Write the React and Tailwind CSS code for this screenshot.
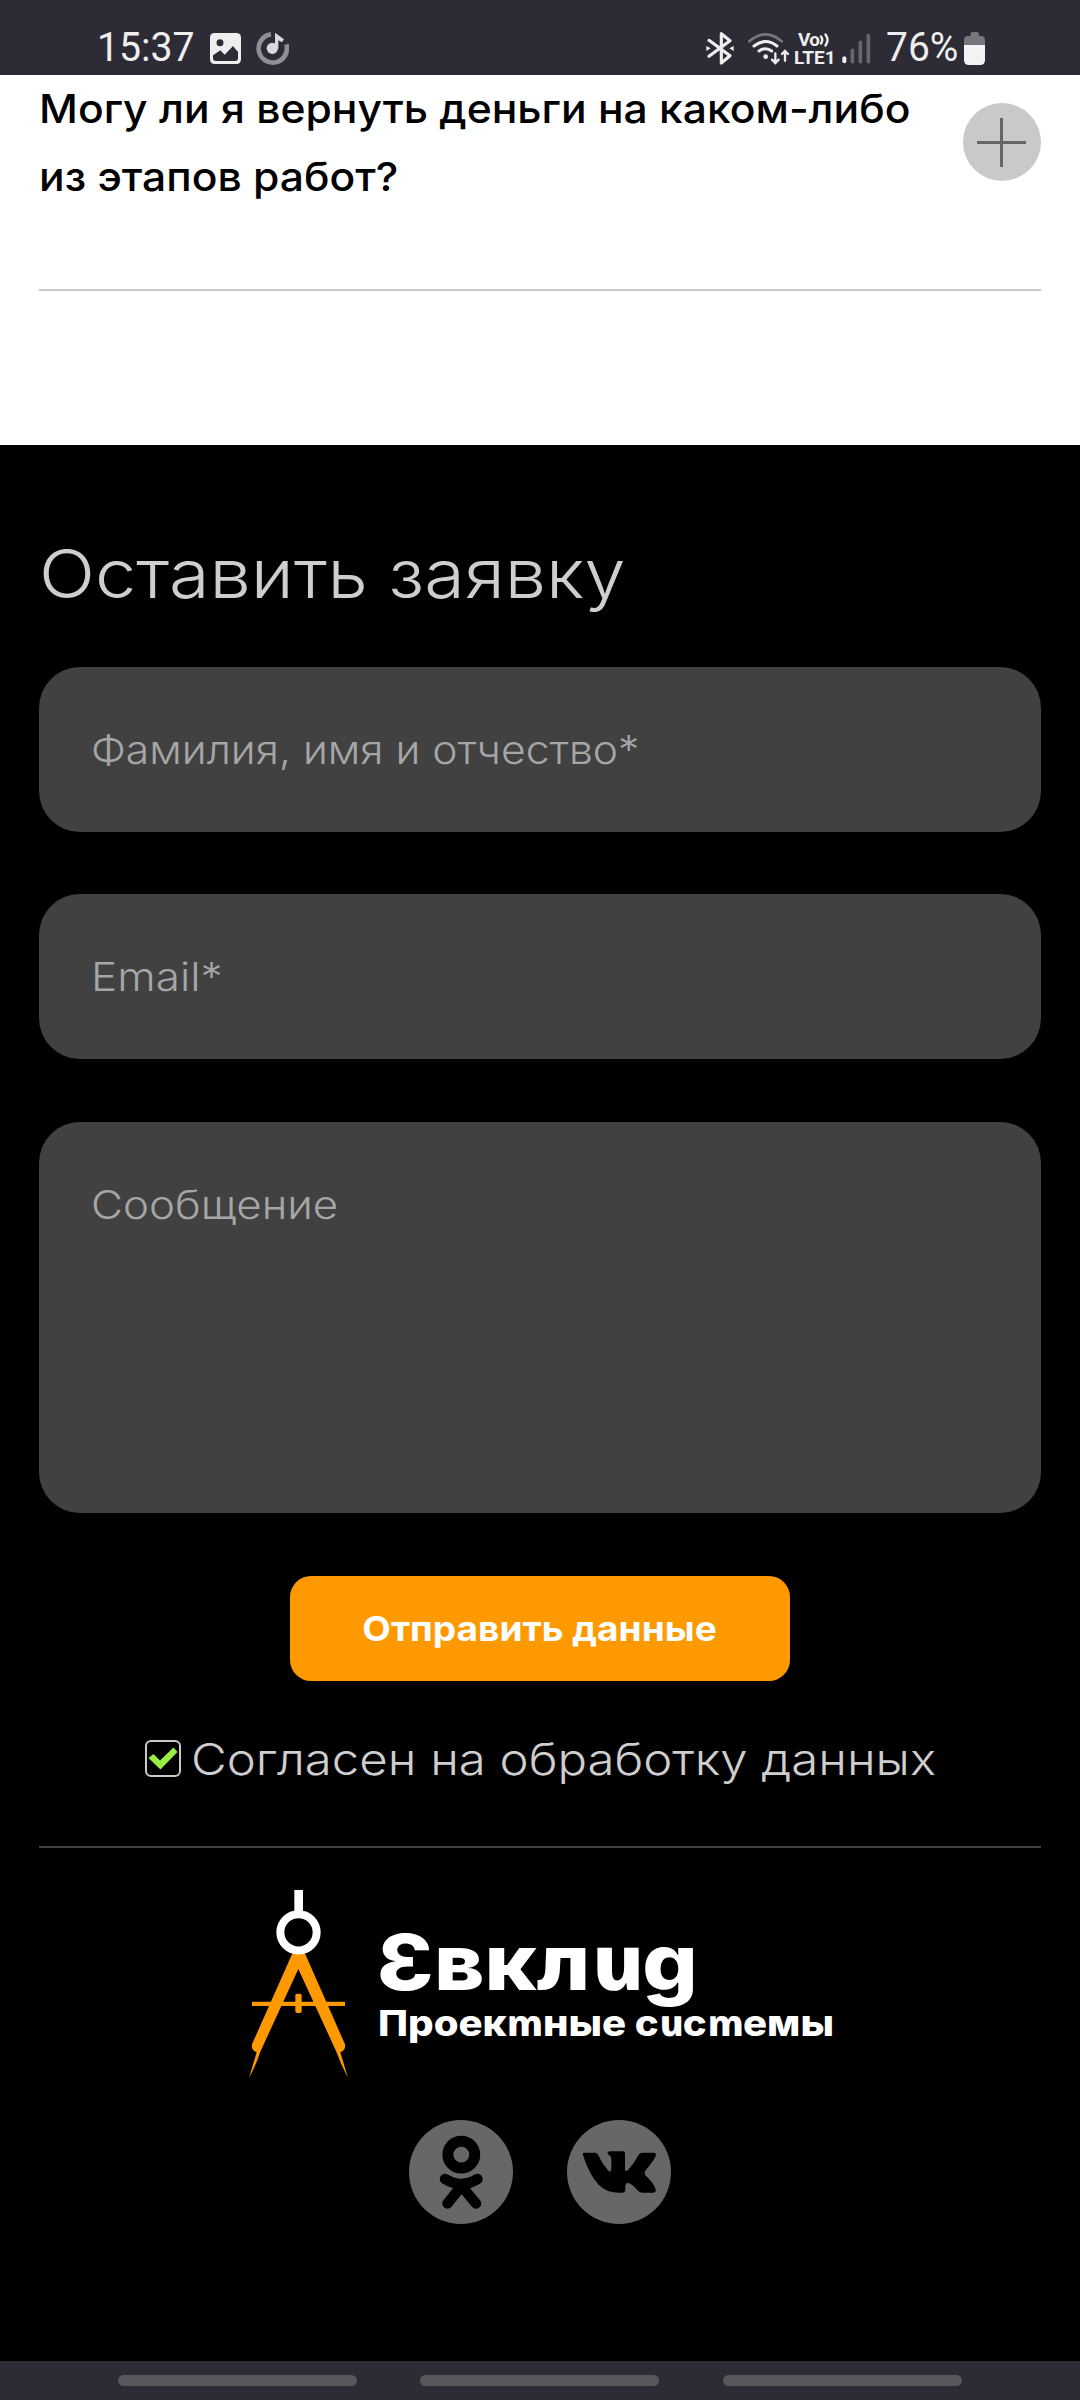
const ROBOTO = "font-['Roboto',sans-serif]";

function StatusBar() {
  return (
    <header className={`flex h-[75px] items-start bg-[#2d2b35] pl-[97px] pr-[95px] text-[#eeeeef] ${ROBOTO}`}>
      <span className="mt-[24px] w-[113px] origin-left scale-x-[0.98] text-[40px] leading-[48px] whitespace-nowrap">15:37</span>
      <svg className="mt-[33px]" width="31" height="31" viewBox="450 99 93 93">
        <path fillRule="evenodd" fill="#eeeeef" d="M464 99H529Q543 99 543 113V178Q543 192 529 192H464Q450 192 450 178V113Q450 99 464 99ZM480 118A10.500 10.500 0 1 0 480 139A10.500 10.500 0 1 0 480 118ZM459 166V174Q459 183 468 183H525Q534 183 534 174V156L519 138L494 164L481 151Z" />
      </svg>
      <svg className="mt-[32px] ml-[15px]" width="33" height="33" viewBox="588 96 99 99">
        <path d="M633 103A42.500 42.500 0 1 0 679 133" fill="none" stroke="#8f8e93" strokeWidth="14" />
        <circle cx="637" cy="145" r="17" fill="#d9d9db" />
        <path d="M645 98L672 118L666 127L655 121V146H645Z" fill="#d9d9db" />
      </svg>

      <div className="ml-auto flex items-start">
        <svg className="mt-[32px]" width="28" height="33" viewBox="80 96 84 99" fill="none" stroke="#eeeeef" strokeWidth="9.500" strokeLinejoin="round" strokeLinecap="round">
          <path d="M89 121L152 167L126 189V101L152 122L89 169" />
          <path d="M81 138L94 145L81 153ZM163 138L150 145L163 153Z" fill="#eeeeef" stroke="none" />
        </svg>
        <svg className="mt-[32px] ml-[14px]" width="42" height="33" viewBox="205 96 126 99" fill="none" strokeLinecap="round">
          <path d="M209 124Q258 82 306 124" stroke="#77767c" strokeWidth="8" />
          <path d="M223 138Q258 111 292 138" stroke="#eeeeef" strokeWidth="9" />
          <path d="M238 153Q258 139 276 153" stroke="#eeeeef" strokeWidth="9" />
          <circle cx="258" cy="170" r="7" fill="#eeeeef" />
          <path d="M287 160V188M277 179L287 189L297 179M316 182V154M307 162L316 153L325 162" stroke="#eeeeef" strokeWidth="7" />
        </svg>
        <div className="mt-[31px] ml-[4px] flex w-[40px] flex-col text-[19px] leading-[17px] font-bold">
          <div className="flex h-[18px] items-start pl-[4px]">
            <span className="tracking-[-0.8px]">Vo</span>
            <svg className="mt-[1px]" width="13" height="16" viewBox="0 0 13 16" fill="none" stroke="#eeeeef" strokeWidth="2.400" strokeLinecap="round">
              <path d="M2 4.500Q4.500 8 2 11.500M6.500 2.500Q10.500 8 6.500 13.500" />
            </svg>
          </div>
          <span>LTE1</span>
        </div>
        <svg className="mt-[32px] ml-[8px]" width="30" height="33" viewBox="488 96 90 99">
          <rect x="489" y="169" width="12" height="21" rx="6" fill="#eeeeef" />
          <path d="M519 151V185M543 127V185M567 107V185" stroke="#66656c" strokeWidth="11" strokeLinecap="round" />
        </svg>
        <span className="mt-[24px] ml-[14px] w-[78px] origin-left scale-x-[0.975] text-[40px] leading-[48px] whitespace-nowrap">76%</span>
        <svg className="mt-[32px]" width="21" height="33" viewBox="0 0 21 33">
          <path d="M6.500 2.500Q6.500 0 9 0H12.500Q15 0 15 2.500V4H17.500Q21 4.500 21 8V14H0V8Q0 4.500 3.500 4H6.500Z" fill="#77767c" />
          <path d="M0 13H21V28Q21 33 16 33H5Q0 33 0 28Z" fill="#f3f3f3" />
        </svg>
      </div>
    </header>
  );
}

function Question() {
  return (
    <section className="h-[370px] bg-white px-[39px]">
      <div className="flex h-[136px] justify-between">
        <p className="origin-left scale-x-[1.0655] text-[40px] leading-[68px] font-medium whitespace-nowrap text-black">
          Могу ли я вернуть деньги на каком-либо
          <br />
          из этапов работ?
        </p>
        <button className="mt-[28px] size-[78px] rounded-full bg-[#c9c9c9]">
          <svg width="78" height="78" viewBox="0 0 78 78" stroke="#666666" strokeWidth="3">
            <path d="M38.500 15V64M14 39.500H63" />
          </svg>
        </button>
      </div>
      <div className="mt-[78px] h-[2px] bg-[#c9c9c9]" />
    </section>
  );
}

function RequestForm() {
  return (
    <form className="flex flex-col px-[39px] pt-[89px] text-[39px] font-light text-[#a6a6a6]">
      <h2 className="origin-left scale-x-[1.101] self-start text-[67px] leading-[80px] font-light whitespace-nowrap text-[#cecece]">Оставить заявку</h2>
      <label className="mt-[53px] flex h-[165px] items-start rounded-[41px] bg-[#414141] pt-[59px] pl-[52px]">
        <span className="origin-left scale-x-[1.093] leading-[48px] whitespace-nowrap">Фамилия, имя и отчество*</span>
      </label>
      <label className="mt-[62px] flex h-[165px] items-start rounded-[41px] bg-[#414141] pt-[59px] pl-[52px]">
        <span className="origin-left scale-x-[1.13] leading-[48px]">Email*</span>
      </label>
      <label className="mt-[63px] flex h-[391px] items-start rounded-[41px] bg-[#414141] pt-[59px] pl-[52px]">
        <span className="origin-left scale-x-[1.125] leading-[48px]">Сообщение</span>
      </label>
      <button type="button" className="mt-[63px] flex h-[105px] w-[500px] items-center justify-center self-center rounded-[21px] bg-[#ff9900] text-[34px] font-bold text-white">
        <span className="scale-x-[1.09] whitespace-nowrap">Отправить данные</span>
      </button>
      <label className="mt-[50px] flex h-[56px] items-start gap-[10px] pl-[106px]">
        <span className="mt-[9px] flex h-[37px] w-[36px] items-center justify-center rounded-[6px] border-2 border-[#c9c9c9]">
          <svg width="30" height="24" viewBox="0 0 30 24">
            <path d="M0.500 11L5.500 7L12 13.500L25.500 0.500L29.500 5L12.500 22.500Z" fill="#99ee44" />
          </svg>
        </span>
        <span className="origin-left scale-x-[1.116] text-[44px] leading-[56px] whitespace-nowrap text-[#cecece]">Согласен на обработку данных</span>
      </label>
      <div className="mt-[59px] h-[2px] bg-[#404040]" />
    </form>
  );
}

function Cursive({ children }) {
  return <span className="inline-block skew-x-[12deg] font-['Noto_Sans',sans-serif] italic">{children}</span>;
}

function Logo() {
  return (
    <div className="mt-[42px] flex h-[188px] pl-[249px] text-white">
      <svg width="99" height="188" viewBox="57 60 297 564" fill="#ff9900">
        <path d="M188 248H224L345 523Q348 540 331 547L354 624Q334 585 319 545L205 297L91 545Q78 585 57 624L80 547Q63 540 66 523Z" />
        <path d="M66 395H345V408H66Z" />
        <rect x="196" y="371" width="19" height="58" rx="5" />
        <path d="M193 60H219V126H193Z" fill="#fff" />
        <circle cx="205.500" cy="187" r="54.500" fill="#000" stroke="#fff" strokeWidth="24" />
      </svg>
      <div className="mt-[31px] ml-[29px] flex flex-col items-start font-extrabold whitespace-nowrap">
        <span className="h-[80px] origin-left scale-x-[1.128] text-[77px] leading-[80px]">
          Ɛвкл<Cursive>и</Cursive>g
        </span>
        <span className="mt-[2px] ml-px h-[40px] origin-left scale-x-[1.115] text-[36px] leading-[40px]">
          Проек<Cursive>т</Cursive>ные с<Cursive>и</Cursive>с<Cursive>т</Cursive>емы
        </span>
      </div>
    </div>
  );
}

function Socials() {
  return (
    <div className="mt-[42px] flex justify-center gap-[54px]">
      <svg width="104" height="104" viewBox="409 2120 104 104" fill="none" stroke="#000" strokeLinecap="round">
        <circle cx="461" cy="2172" r="52" fill="#676767" stroke="none" />
        <circle cx="461.300" cy="2154.700" r="13.400" strokeWidth="11" />
        <path d="M445 2179Q461.500 2189 477.500 2179M461.500 2186L447.500 2203.500M461.500 2186L476 2203.500" strokeWidth="10.500" />
      </svg>
      <svg width="104" height="104" viewBox="531 60 312 312">
        <circle cx="687" cy="216" r="156" fill="#676767" />
        <path d="M578 162Q578 158 584 158L616 158Q622 158 625 166Q636 192 655 212Q659 216 662 213L664 206L664 180Q664 168 654 163Q650 158 658 154L698 154Q705 154 705 162L705 210Q708 216 714 210Q732 192 745 166Q748 158 756 158L793 158Q800 160 797 168Q790 184 766 212Q761 219 766 226Q792 250 797 268Q799 278 790 278L757 278Q750 278 744 272Q728 254 716 249Q707 248 706 258L706 270Q705 278 696 278Q650 280 626 254Q596 222 578 162Z" />
      </svg>
    </div>
  );
}

function NavigationBar() {
  return (
    <nav className="flex h-[39px] items-start bg-[#2d2b35] pt-[14px] pl-[118px]">
      <span className="h-[11px] w-[239px] rounded-full bg-[#57575c]" />
      <span className="ml-[63px] h-[11px] w-[239px] rounded-full bg-[#57575c]" />
      <span className="ml-[64px] h-[11px] w-[239px] rounded-full bg-[#57575c]" />
    </nav>
  );
}

export default function App() {
  return (
    <div className="flex h-[2400px] w-[1080px] flex-col overflow-hidden bg-black font-['Inter',sans-serif]">
      <StatusBar />
      <Question />
      <main className="h-[1916px] bg-black">
        <RequestForm />
        <Logo />
        <Socials />
      </main>
      <NavigationBar />
    </div>
  );
}
